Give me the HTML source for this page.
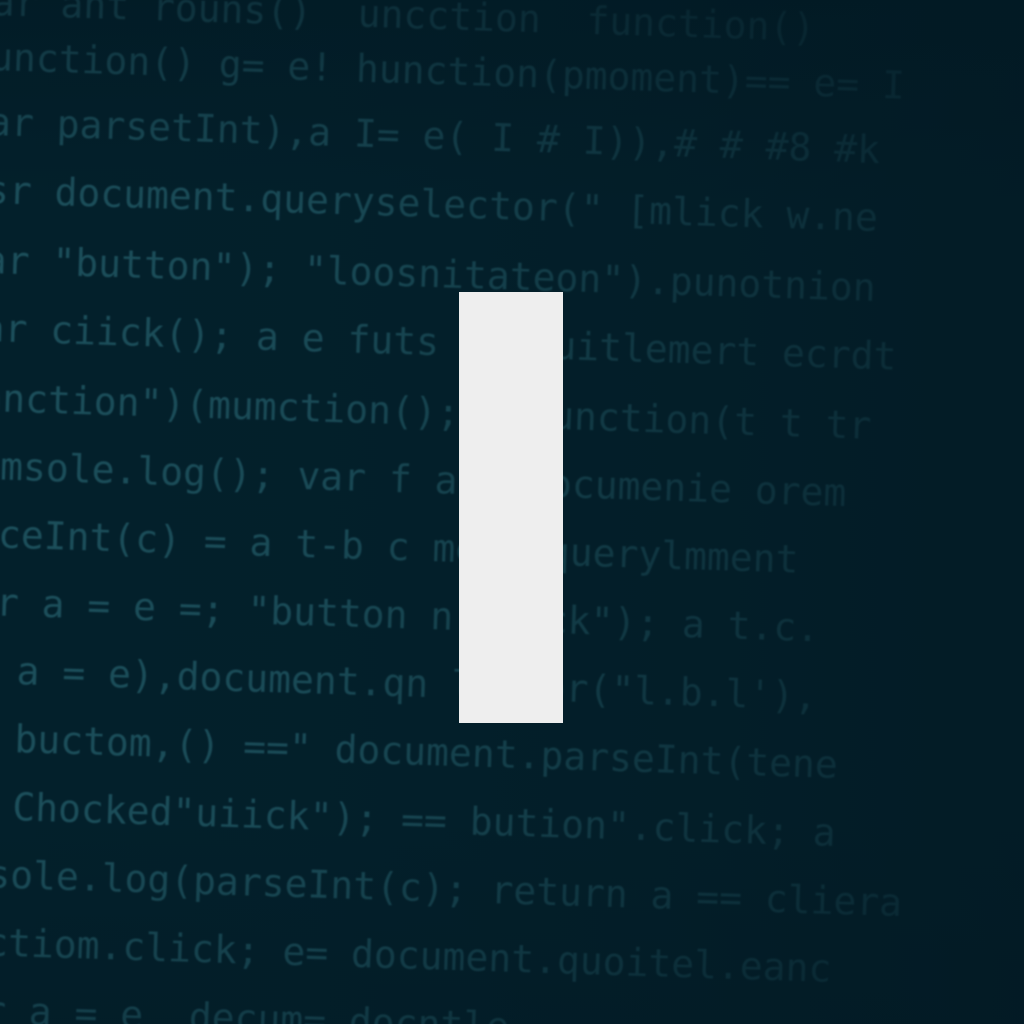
<!DOCTYPE html>
<html><head><meta charset="utf-8"><style>
html,body{margin:0;padding:0;width:1024px;height:1024px;overflow:hidden}
body{background:#03202b;position:relative}
.code{position:absolute;left:-8px;top:0;width:1500px;font-family:"DejaVu Sans Mono","Liberation Mono",monospace;font-size:38px;color:#1c4f5b;white-space:pre;transform-origin:0 0;transform:rotate(1.8deg);}
.code div{position:absolute;left:0;filter:blur(0.7px)}
.fade{position:absolute;inset:0;background:linear-gradient(90deg,rgba(3,28,38,0) 0%,rgba(3,28,38,0.1) 30%,rgba(3,28,38,0.5) 65%,rgba(3,26,36,0.75) 100%)}
.fade2{position:absolute;inset:0;background:linear-gradient(180deg,rgba(2,24,34,0.5) 0%,rgba(2,24,34,0) 20%,rgba(2,24,34,0) 80%,rgba(2,24,34,0.3) 100%)}
.rect{position:absolute;left:459px;top:292px;width:104px;height:431px;background:#eeeeee}
</style></head><body>
<div class="code">
<div style="top:-20px">ar ant rouns()  uncction  function()</div>
<div style="top:35px">unction() g= e! hunction(pmoment)== e= I</div>
<div style="top:100px">ar parsetInt),a I= e( I # I)),# # #8 #k</div>
<div style="top:168px">sr document.queryselector(" [mlick w.ne</div>
<div style="top:238px">ar "button"); "loosnitateon").punotnion</div>
<div style="top:306px">ar ciick(); a e futs ec.quitlemert ecrdt</div>
<div style="top:376px">anction")(mumction(); = function(t t tr</div>
<div style="top:444px">omsole.log(); var f a = documenie orem</div>
<div style="top:512px">sceInt(c) = a t-b c ment.querylmment</div>
<div style="top:580px">ar a = e =; "button n.click"); a t.c.</div>
<div style="top:648px">r a = e),document.qn lector("l.b.l'),</div>
<div style="top:716px">r buctom,() ==" document.parseInt(tene</div>
<div style="top:784px">r Chocked"uiick"); == bution".click; a</div>
<div style="top:852px">usole.log(parseInt(c); return a == cliera</div>
<div style="top:920px">uctiom.click; e= document.quoitel.eanc</div>
<div style="top:988px">ar a = e  decum= docntle</div>
</div>
<div class="fade"></div>
<div class="fade2"></div>
<div class="rect"></div>
</body></html>
